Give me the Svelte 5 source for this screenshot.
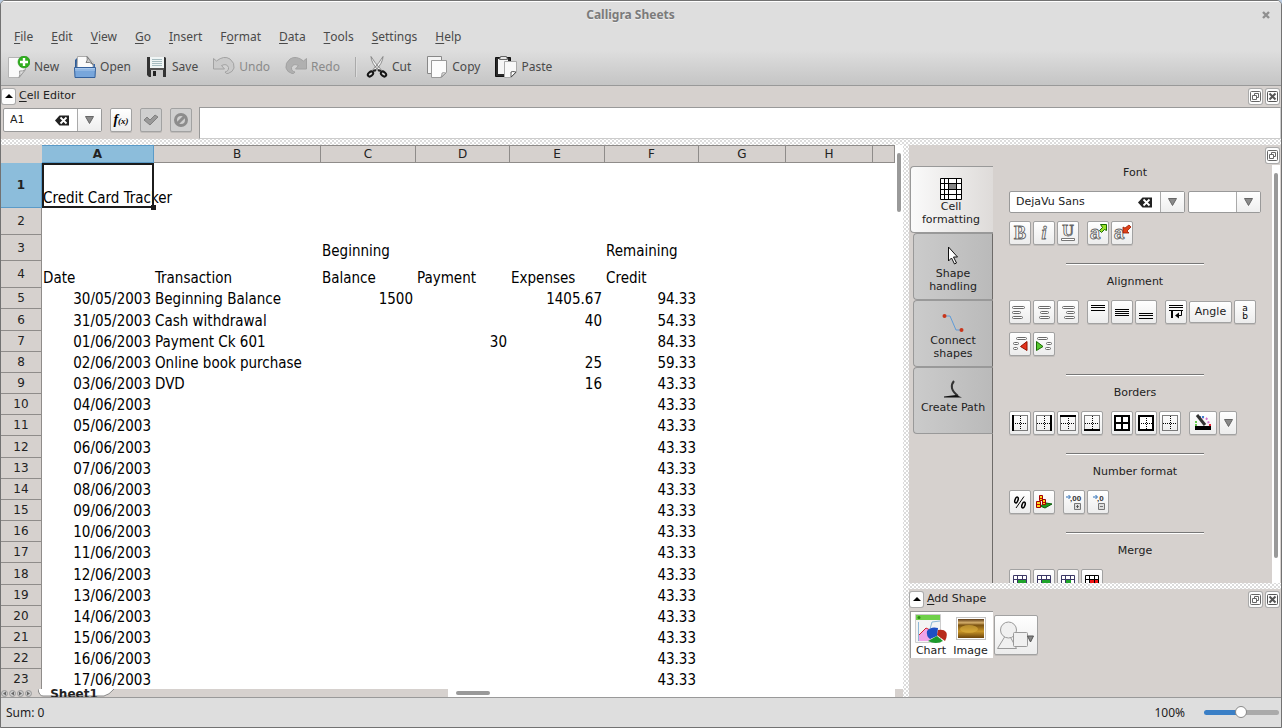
<script lang="ts">
  interface Row {
    n: number;
    height: number;
    cells: string[];
  }

  const columns = [
    { name: "A", width: 112 },
    { name: "B", width: 167 },
    { name: "C", width: 95 },
    { name: "D", width: 94 },
    { name: "E", width: 95 },
    { name: "F", width: 94 },
    { name: "G", width: 87 },
    { name: "H", width: 87 },
  ];

  const menus = ["File", "Edit", "View", "Go", "Insert", "Format", "Data", "Tools", "Settings", "Help"];
  // index of the underlined letter, when it is not the first one
  const accel: Record<string, number> = { Format: 1 };

  const tools = [
    { id: "new", label: "New" },
    { id: "open", label: "Open" },
    { id: "save", label: "Save" },
    { id: "undo", label: "Undo", disabled: true },
    { id: "redo", label: "Redo", disabled: true },
    { id: "sep", label: "" },
    { id: "cut", label: "Cut" },
    { id: "copy", label: "Copy" },
    { id: "paste", label: "Paste" },
  ];

  const head: Row[] = [
    { n: 1, height: 45, cells: ["Credit Card Tracker"] },
    { n: 2, height: 27, cells: [] },
    { n: 3, height: 26, cells: ["", "", "Beginning", "", "", "Remaining"] },
    { n: 4, height: 27, cells: ["Date", "Transaction", "Balance", "Payment", "Expenses", "Credit"] },
  ];

  const entries = [
    ["Beginning Balance", "1500", "", "1405.67", "94.33"],
    ["Cash withdrawal", "", "", "40", "54.33"],
    ["Payment Ck 601", "", "30", "", "84.33"],
    ["Online book purchase", "", "", "25", "59.33"],
    ["DVD", "", "", "16", "43.33"],
  ];

  function dateFor(i: number) {
    const d = new Date(2003, 4, 30 + i);
    const pad = (v: number) => String(v).padStart(2, "0");
    return `${pad(d.getDate())}/${pad(d.getMonth() + 1)}/${d.getFullYear()}`;
  }

  const body: Row[] = Array.from({ length: 19 }, (_, i) => ({
    n: i + 5,
    height: (i + 5) % 6 === 0 ? 22 : 21,
    cells: [dateFor(i), ...(entries[i] ?? ["", "", "", "", "43.33"])],
  }));

  const rows = [...head, ...body];

  const isValue = (text: string) => /^[\d./]+$/.test(text);

  const tabs = [
    { id: "cells", label: ["Cell", "formatting"] },
    { id: "pointer", label: ["Shape", "handling"] },
    { id: "connect", label: ["Connect", "shapes"] },
    { id: "path", label: ["Create Path"] },
  ];
  let activeTab = "cells";

  // every inner list is one run of buttons
  const fontButtons = [["bold", "italic", "underline"], ["bigger", "smaller"]];
  const alignButtons = [["left", "center", "right"], ["top", "middle", "bottom"]];
  const borderButtons = [["b-left", "b-right", "b-top", "b-bottom"], ["b-all", "b-outline", "b-none"]];
  const numberButtons = [["percent", "money"], ["more-digits", "less-digits"]];
  const mergeButtons = [["merge", "merge-h", "merge-v", "split"]];

  let cellName = "A1";
  let fontName = "DejaVu Sans";
  let fontSize = "";
  let formula = "";
  let zoom = 49;
</script>

{#snippet icon(id: string)}
  {#if id === "new"}
    <svg width="22" height="22" viewBox="0 0 22 22">
      <path d="M.5 1.500h17v12l-6 8H.5z" fill="#fafafa" stroke="#b4b4b4" />
      <path d="M17.500 13.500q-3 2-6 1.500 1 3.500-.5 6.500z" fill="#e0e0e0" stroke="#999" />
      <circle cx="16" cy="6" r="6" fill="#2fae1d" stroke="#1f8f12" stroke-width=".6" />
      <path d="M16 2v8M12 6h8" stroke="#fff" stroke-width="2.400" />
    </svg>
  {:else if id === "open"}
    <svg width="22" height="22" viewBox="0 0 22 22">
      <path d="M1 4l2-2h3v10H1z" fill="#2d5b96" />
      <path d="M18 8h3v6h-4z" fill="#3a6bab" />
      <path d="M3.500.5H13l6 6v8h-16z" fill="#fafafa" stroke="#aaa" />
      <path d="M13 .5q1 4-1 6 4-1 7 2z" fill="#ccc" stroke="#666" stroke-width=".8" />
      <path d="M.5 11.500h21l-.5 10H1z" fill="#78a6db" stroke="#33609c" />
      <path d="M1 12.500h20M1 14h20" stroke="#a9c8ec" />
    </svg>
  {:else if id === "save"}
    <svg width="22" height="22" viewBox="0 0 22 22">
      <path d="M1 1h18l1 1v19H3l-2-2z" fill="#333" />
      <path d="M4 1h14v11H4z" fill="#f0f5f5" />
      <path d="M6 3.500h10M6 5.500h10M6 7.500h10M6 9.500h10" stroke="#a6bcc0" />
      <path d="M5 14h12v7H5z" fill="#c9c9c9" />
      <path d="M7 15h3v5H7z" fill="#222" />
      <path d="M4 13h14" stroke="#777" />
    </svg>
  {:else if id === "undo" || id === "redo"}
    <svg width="22" height="22" viewBox="0 0 22 22">
      <g transform={id === "redo" ? "matrix(-1 0 0 1 22 0)" : undefined}>
        <path
          d="M.5 2.500l3 2.500Q11-1 17 3q5 4 4 9-1 4-6 5.500-2 .5-3-1.500 4-1 3.500-4.500Q14 7 8.500 9.500l3 3.500H.5z"
          fill={id === "redo" ? "#b0b0b0" : "#cacaca"}
          stroke="#a2a2a2" />
      </g>
    </svg>
  {:else if id === "cut"}
    <svg width="22" height="22" viewBox="0 0 22 22">
      <path d="M5 .5q0 6 8 15l2-2Q8 6 5 .5zM17 .5q0 6-8 15l-2-2Q14 6 17 .5z" fill="#f4f4f4" stroke="#777" stroke-width=".8" />
      <ellipse cx="4.500" cy="18" rx="3" ry="2" fill="none" stroke="#151515" stroke-width="2" transform="rotate(-40 4.500 18)" />
      <ellipse cx="17.500" cy="18" rx="3" ry="2" fill="none" stroke="#151515" stroke-width="2" transform="rotate(40 17.500 18)" />
      <path d="M7 15l3-1M15 15l-3-1" stroke="#222" stroke-width="2" />
    </svg>
  {:else if id === "copy"}
    <svg width="22" height="22" viewBox="0 0 22 22">
      <path d="M1.500.5h14v17h-14z" fill="#f4f4f4" stroke="#888" />
      <path d="M5.500 4.500h15v12l-5 5h-10z" fill="#fcfcfc" stroke="#999" />
      <path d="M20 17q-3-1-4 0 0 2-1 4z" fill="#d8d8d8" stroke="#888" stroke-width=".7" />
    </svg>
  {:else if id === "paste"}
    <svg width="22" height="22" viewBox="0 0 22 22">
      <path d="M.5 1.500h15v19H.5z" fill="#292929" stroke="#111" />
      <path d="M3 3h10v15H3z" fill="#f5f5f5" />
      <path d="M5.500.5h6l1 3h-8z" fill="#e5e5e5" stroke="#666" />
      <path d="M9.500 5.500h12v11l-5 5h-7z" fill="#f8f8f8" stroke="#aaa" />
      <path d="M21 16q-4-1-5 0 0 3 0 5z" fill="#fff" stroke="#444" stroke-width=".9" />
    </svg>
  {:else if id === "clear"}
    <svg width="14" height="11" viewBox="0 0 14 11">
      <path d="M0 5.500L4.500.5H14v10H4.500z" fill="#222" />
      <path d="M5.500 2.500l6 6m0-6l-6 6" stroke="#fff" stroke-width="1.800" />
    </svg>
  {:else if id === "drop"}
    <svg width="9" height="8" viewBox="0 0 9 8">
      <path d="M.5.500h8L4.500 7.500z" fill="#8a8a8a" stroke="#666" />
    </svg>
  {:else if id === "float"}
    <svg width="11" height="11" viewBox="0 0 11 11" fill="none" stroke="#666">
      <rect x=".5" y=".5" width="10" height="10" rx="1" />
      <path d="M4.500 4.500v-2h4v4h-2M2.500 4.500h4v4h-4z" />
    </svg>
  {:else if id === "close"}
    <svg width="11" height="11" viewBox="0 0 11 11" fill="none" stroke="#555">
      <rect x=".5" y=".5" width="10" height="10" rx="1" />
      <path d="M2.500 2.500l6 6m0-6l-6 6" stroke-width="2" />
    </svg>
  {:else if id === "up"}
    <svg width="8" height="4" viewBox="0 0 8 4"><path d="M0 4l4-4 4 4z" fill="#000" /></svg>
  {:else if id === "ok"}
    <svg width="16" height="14" viewBox="0 0 16 14">
      <path d="M1 7l3-3 3 3 5-5 3 2-8 8z" fill="#999" stroke="#808080" />
    </svg>
  {:else if id === "cancel"}
    <svg width="16" height="16" viewBox="0 0 16 16" fill="none">
      <circle cx="8" cy="8" r="5.500" stroke="#8c8c8c" stroke-width="3" />
      <path d="M4.500 11.500l7-7" stroke="#8c8c8c" stroke-width="3" />
    </svg>
  {:else if id === "cells"}
    <svg width="22" height="22" viewBox="0 0 22 22">
      <path d="M.5.500h21v21H.5z" fill="#fff" stroke="#000" />
      <path d="M9 6h7v5H9z" fill="#888" />
      <path d="M4.500 0v22M8.500 0v22M16.500 0v22M0 5.500h22M0 11.500h22M0 16.500h22" stroke="#000" />
    </svg>
  {:else if id === "pointer"}
    <svg width="22" height="22" viewBox="0 0 22 22">
      <path d="M6.500 2v14l3-3 3 6 2-1-3-6h4z" fill="#fff" stroke="#111" />
    </svg>
  {:else if id === "connect"}
    <svg width="22" height="22" viewBox="0 0 22 22">
      <path d="M2 4h6l6 14h6" fill="none" stroke="#5e9bd8" />
      <circle cx="2.500" cy="4" r="2" fill="#c8351b" />
      <circle cx="19.500" cy="18" r="2" fill="#c8351b" />
    </svg>
  {:else if id === "path"}
    <svg width="22" height="22" viewBox="0 0 22 22">
      <path d="M12 2q-6 7 4 15" fill="none" stroke="#333" stroke-width="2" />
      <path d="M2 17.500l12-1.500 6 2.500H2z" fill="#111" />
    </svg>
  {:else if id === "bold" || id === "italic" || id === "underline"}
    <svg width="18" height="18" viewBox="0 0 18 18">
      <text
        x="9"
        y={id === "underline" ? 12 : 15}
        text-anchor="middle"
        font-family="Liberation Serif, serif"
        font-weight="bold"
        font-style={id === "italic" ? "italic" : "normal"}
        font-size={id === "underline" ? 16 : 18}
        fill="#fff"
        stroke="#666"
        stroke-width=".9">{id === "bold" ? "B" : id === "italic" ? "i" : "U"}</text>
      {#if id === "underline"}<path d="M2.500 14.500h13v2h-13z" fill="#fff" stroke="#777" />{/if}
    </svg>
  {:else if id === "bigger" || id === "smaller"}
    <svg width="18" height="18" viewBox="0 0 18 18">
      <text x="1" y="15" font-family="Liberation Sans, sans-serif" font-weight="bold" font-size="18" fill="#fff" stroke="#666" stroke-width=".9">a</text>
      {#if id === "bigger"}
        <path d="M11.500.500h6v6l-2-1-3 3-2-2 3-3z" fill="#9be02c" stroke="#176b00" />
      {:else}
        <path d="M10 9V3l2 1 4-3 2 2-4 4 2 2z" fill="#e0431b" stroke="#9c1c00" stroke-width=".8" />
      {/if}
    </svg>
  {:else if id === "left" || id === "center" || id === "right"}
    <svg width="18" height="18" viewBox="0 0 18 18" fill="#fff" stroke="#6a6a6a">
      <rect x={id === "left" ? 1.5 : 3.5} y="3.500" width="12" height="2" rx="1" />
      <rect x={id === "left" ? 1.5 : id === "center" ? 5.5 : 7.5} y="8.500" width="8" height="2" rx="1" />
      <rect x={id === "left" ? 1.5 : id === "center" ? 4.5 : 5.5} y="13.500" width="10" height="2" rx="1" />
    </svg>
  {:else if id === "top" || id === "middle" || id === "bottom"}
    <svg width="18" height="18" viewBox="0 0 18 18" stroke="#000">
      {#if id === "top"}
        <path d="M2 2.500h14M2 4.500h14M2 7.500h14" />
      {:else if id === "middle"}
        <path d="M2 6.500h14M2 8.500h14M2 10.500h14M2 12.500h14" />
      {:else}
        <path d="M2 10.500h14M2 12.500h14M2 15.500h14" />
      {/if}
    </svg>
  {:else if id === "wrap"}
    <svg width="18" height="18" viewBox="0 0 18 18" fill="none" stroke="#000">
      <path d="M2 2.500h14M2 4.500h14M2 7.500h14" />
      <path d="M5 8v7" stroke-width="2" />
      <path d="M14.500 8v4.500H9" />
      <path d="M12 9.500v6l-4-3z" fill="#000" stroke="none" />
    </svg>
  {:else if id === "vertical"}
    <svg width="18" height="18" viewBox="0 0 18 18" font-family="DejaVu Sans, sans-serif" font-size="9" text-anchor="middle">
      <text x="9" y="8">a</text>
      <text x="9" y="16">b</text>
    </svg>
  {:else if id === "outdent" || id === "indent"}
    <svg width="18" height="18" viewBox="0 0 18 18" fill="#fff" stroke="#6a6a6a">
      <rect x={id === "outdent" ? 5.5 : 2.5} y="2.500" width="10" height="2" rx="1" />
      {#if id === "outdent"}
        <rect x="2.500" y="7.500" width="5" height="2" rx="1" />
        <rect x="2.500" y="12.500" width="4" height="2" rx="1" />
        <path d="M16 6.500v9L9.500 11.500z" fill="#e5321c" stroke="#8f1200" />
      {:else}
        <rect x="11.500" y="7.500" width="5" height="2" rx="1" />
        <rect x="10.500" y="12.500" width="5" height="2" rx="1" />
        <path d="M1.500 6.500v9L8 11.500z" fill="#58c730" stroke="#186b00" />
      {/if}
    </svg>
  {:else if id.startsWith("b-")}
    <svg width="18" height="18" viewBox="0 0 18 18" fill="none" stroke="#000">
      {#if id === "b-all" || id === "b-outline"}
        <path d="M2 2h14v14H2z" stroke-width="2" fill="#fff" />
      {:else}
        <path d="M1.500 1.500h15v15h-15z" stroke-dasharray="1 1" />
      {/if}
      {#if id === "b-all"}
        <path d="M9 2v14M2 9h14" stroke-width="2" />
      {:else}
        <path d="M9.500 2v14M2 9.500h14" stroke-dasharray="1 1" />
      {/if}
      {#if id === "b-left"}<path d="M2 1v16" stroke-width="2" />{/if}
      {#if id === "b-right"}<path d="M16 1v16" stroke-width="2" />{/if}
      {#if id === "b-top"}<path d="M1 2h16" stroke-width="2" />{/if}
      {#if id === "b-bottom"}<path d="M1 16h16" stroke-width="2" />{/if}
    </svg>
  {:else if id === "color"}
    <svg width="18" height="18" viewBox="0 0 18 18">
      <path d="M8 3.500q6-1 7 8" fill="none" stroke="#d06fd0" stroke-width="2" stroke-dasharray="2 2" />
      <path d="M5 3h6" stroke="#3f7fd0" stroke-width="2" stroke-dasharray="2 1" />
      <path d="M2 7v5" stroke="#62c94c" stroke-width="2" stroke-dasharray="2 1" />
      <path d="M3 1l8 10" stroke="#333" stroke-width="3" />
      <path d="M1 12h16v4H1z" fill="#000" />
      <path d="M15 10h2v2h-2z" fill="#e23" />
    </svg>
  {:else if id === "percent"}
    <svg width="18" height="18" viewBox="0 0 18 18" fill="none" stroke="#000">
      <path d="M13 3.500L5 15" />
      <ellipse cx="5.500" cy="7" rx="1.500" ry="3" stroke-width="1.500" transform="rotate(20 5.500 7)" />
      <ellipse cx="12.500" cy="12" rx="1.500" ry="3" stroke-width="1.500" transform="rotate(20 12.500 12)" />
    </svg>
  {:else if id === "money"}
    <svg width="18" height="18" viewBox="0 0 18 18">
      <path d="M5 13l6-3 6 1-7 4z" fill="#1d9a1d" stroke="#0a5c0a" />
      <path d="M4.500 2.500h3v5h-3zM1.500 8.500h4v6h-4zM7.500 6.500h3v5h-3z" fill="#f9d71c" stroke="#a30000" />
      <path d="M5 5.500h2M2 11.500h3M8 9.500h2" stroke="#d10000" />
    </svg>
  {:else if id === "more-digits" || id === "less-digits"}
    <svg width="18" height="18" viewBox="0 0 18 18">
      <text x={id === "more-digits" ? 5 : 8} y="8" font-family="Liberation Sans, sans-serif" font-weight="bold" font-size="8" fill="#333">{id === "more-digits" ? ",00" : ",0"}</text>
      <path d={id === "more-digits" ? "M1 4h4M3.500 2l2 2-2 2" : "M4 4h4M6.500 2l2 2-2 2"} fill="none" stroke="#2a6db5" />
      <path d="M9.500 10.500h6v6h-6zM11 13.500h3" fill="#ddd" stroke="#777" />
      {#if id === "more-digits"}<path d="M12.500 12v3" stroke="#555" />{/if}
    </svg>
  {:else if id.startsWith("merge") || id === "split"}
    <svg width="18" height="18" viewBox="0 0 18 18">
      <path d="M2.500 3.500h13v11h-13z" fill="#fff" />
      <path
        d={id === "merge-v" ? "M7 8h5v7H7z" : id === "split" ? "M6 8h10v4H6z" : "M7 8h9v4H7z"}
        fill={id === "split" ? "#f01414" : "#1fa32a"} />
      <path d="M2.500 3.500h13v11h-13zM6.500 3v12M11.500 3v4M2 7.500h14M2 11.500h5" fill="none" stroke={id === "split" ? "#000" : "#3b3765"} />
      {#if id === "split"}<path d="M11.500 7v8M6 11.500h10" stroke="#000" />{/if}
    </svg>
  {/if}
{/snippet}

{#snippet groups(list: string[][])}
  {#each list as group}
    <div class="group">
      {#each group as id}
        <button class="tool-btn" aria-label={id}>{@render icon(id)}</button>
      {/each}
    </div>
  {/each}
{/snippet}

<div class="window">
  <header class="chrome">
    <div class="titlebar">
      <h1>Calligra Sheets</h1>
      <button class="window-close" aria-label="Close window">
        <svg width="8" height="8" viewBox="0 0 8 8"><path d="M1 1l6 6m0-6L1 7" stroke="#8f8f8f" stroke-width="2.400" /></svg>
      </button>
    </div>
    <nav class="menubar">
      {#each menus as menu}
        {@const at = accel[menu] ?? 0}
        <button>{menu.slice(0, at)}<u>{menu[at]}</u>{menu.slice(at + 1)}</button>
      {/each}
    </nav>
    <div class="toolbar">
      {#each tools as tool}
        {#if tool.id === "sep"}
          <span class="tool-sep"></span>
        {:else}
          <button disabled={tool.disabled}>{@render icon(tool.id)}<span>{tool.label}</span></button>
        {/if}
      {/each}
    </div>
  </header>

  <section class="editor">
    <div class="dock-title">
      <button class="mini" aria-label="Collapse cell editor">{@render icon("up")}</button>
      <h2><u>C</u>ell Editor</h2>
      <button class="mini" aria-label="Float cell editor">{@render icon("float")}</button>
      <button class="mini" aria-label="Close cell editor">{@render icon("close")}</button>
    </div>
    <div class="editor-row">
      <div class="editor-tools">
        <div class="combo name-box">
          <input type="text" aria-label="Cell name" bind:value={cellName} />
          <button class="clear" aria-label="Clear" on:click={() => (cellName = "")}>{@render icon("clear")}</button>
          <button class="arrow" aria-label="Show names">{@render icon("drop")}</button>
        </div>
        <button class="tool-btn fx" aria-label="Insert function"><i>f<small>(x)</small></i></button>
        <button class="tool-btn off" aria-label="Apply" disabled>{@render icon("ok")}</button>
        <button class="tool-btn off" aria-label="Cancel" disabled>{@render icon("cancel")}</button>
      </div>
      <textarea class="formula" aria-label="Formula" bind:value={formula}></textarea>
    </div>
  </section>

  <div class="grip"></div>

  <main>
    <section class="sheet">
      <div class="sheet-view">
        <div class="grid-area">
          <table>
            <colgroup>
              <col style="width: 41px" />
              {#each columns as col}
                <col style="width: {col.width}px" />
              {/each}
              <col />
            </colgroup>
            <thead>
              <tr>
                <td class="corner"></td>
                {#each columns as col}
                  <th scope="col" class:current={col.name === "A"}>{col.name}</th>
                {/each}
                <th></th>
              </tr>
            </thead>
            <tbody>
              {#each rows as row}
                <tr style="height: {row.height}px">
                  <th scope="row" class:current={row.n === 1}>{row.n}</th>
                  {#each columns as col, c}
                    <td class:value={isValue(row.cells[c] ?? "")} class:selected={row.n === 1 && c === 0}>{row.cells[c] ?? ""}</td>
                  {/each}
                  <td></td>
                </tr>
              {/each}
            </tbody>
          </table>
        </div>
        <div class="vscroll"><span></span></div>
      </div>
      <div class="sheet-bar">
        <div class="sheet-tabs">
          {#each ["First", "Previous", "Next", "Last"] as label, i}
            <button class="step" aria-label="{label} sheet">
              <svg width="7" height="7" viewBox="0 0 7 7">
                <circle cx="3.500" cy="3.500" r="3" fill="#ccc" stroke="#999" />
                <path d={i < 2 ? "M5 1.500v4L2 3.500z" : "M2 1.500v4l3-2z"} fill="#666" />
              </svg>
            </button>
          {/each}
          <button class="sheet-tab">
            <svg width="80" height="8" viewBox="0 0 80 8"><path d="M0 0q1 7 5 7h61q5-1 10-7z" fill="#fff" /><path d="M0 0q1 7 5 7h61q5-1 10-7" fill="none" stroke="#888" /></svg>
            <span>Sheet1</span>
          </button>
        </div>
        <div class="hscroll"><span></span></div>
      </div>
    </section>

    <div class="grip upright"></div>

    <aside>
      <section class="options">
        <div class="dock-title bare">
          <button class="mini" aria-label="Float tool options">{@render icon("float")}</button>
        </div>
        <div class="options-body">
          <div class="tabs">
            {#each tabs as tab}
              <button class="tab" class:active={tab.id === activeTab} on:click={() => (activeTab = tab.id)}>
                {@render icon(tab.id)}
                {#each tab.label as line}<span>{line}</span>{/each}
              </button>
            {/each}
            <div class="tabs-rest"></div>
          </div>

          <div class="panel">
            <h3>Font</h3>
            <div class="row fonts">
              <div class="combo font-name">
                <input type="text" aria-label="Font" bind:value={fontName} />
                <button class="clear" aria-label="Clear font" on:click={() => (fontName = "")}>{@render icon("clear")}</button>
                <button class="arrow" aria-label="Show fonts">{@render icon("drop")}</button>
              </div>
              <div class="combo font-size">
                <select aria-label="Font size" bind:value={fontSize}>
                  <option value=""></option>
                  <option>10</option>
                  <option>12</option>
                </select>
                <span class="arrow">{@render icon("drop")}</span>
              </div>
            </div>
            <div class="row">{@render groups(fontButtons)}</div>
            <hr />

            <h3>Alignment</h3>
            <div class="row">
              {@render groups(alignButtons)}
              <div class="group">
                <button class="tool-btn" aria-label="Wrap text">{@render icon("wrap")}</button>
                <button class="tool-btn angle">Angle</button>
                <button class="tool-btn" aria-label="Vertical text">{@render icon("vertical")}</button>
              </div>
            </div>
            <div class="row">{@render groups([["outdent", "indent"]])}</div>
            <hr />

            <h3>Borders</h3>
            <div class="row">
              {@render groups(borderButtons)}
              <div class="group">
                <button class="tool-btn wide" aria-label="Border color">{@render icon("color")}</button>
                <button class="tool-btn narrow" aria-label="More colors">{@render icon("drop")}</button>
              </div>
            </div>
            <hr />

            <h3>Number format</h3>
            <div class="row">{@render groups(numberButtons)}</div>
            <hr />

            <h3>Merge</h3>
            <div class="row">{@render groups(mergeButtons)}</div>
          </div>

          <div class="vscroll panel-scroll"><span></span></div>
        </div>
      </section>

      <div class="grip"></div>

      <section class="shapes">
        <div class="dock-title">
          <button class="mini" aria-label="Collapse shapes">{@render icon("up")}</button>
          <h2><u>A</u>dd Shape</h2>
          <button class="mini" aria-label="Float shapes">{@render icon("float")}</button>
          <button class="mini" aria-label="Close shapes">{@render icon("close")}</button>
        </div>
        <div class="shapes-row">
          <div class="shape-list">
            <button>
              <svg width="32" height="30" viewBox="0 0 32 30">
                <path d="M.5.500h25v28H.5z" fill="#f4f4f4" stroke="#ccc" />
                <path d="M1 1h24v5H1z" fill="#6fd04a" />
                <circle cx="4" cy="3.500" r="1.500" fill="#2f8f16" />
                <path d="M4 27V21l7-7 5 3v10z" fill="#f0a4e8" />
                <path d="M4 21l7-7 4 2" fill="none" stroke="#d2232a" />
                <path d="M3.500 8v19M15 15l2-7 8-1" fill="none" stroke="#8cb8d8" />
                <path d="M12 17q4-5 11-3l-1 8-7 3q-4-3-3-8z" fill="#1f4fc4" />
                <path d="M22 21l1-5q6-1 8 2t-1 9z" fill="#b82b1b" />
                <path d="M13 27l9-5 6 5q-7 4-15 0z" fill="#1c9a2b" />
              </svg>
              <span>Chart</span>
            </button>
            <button>
              <svg width="30" height="30" viewBox="0 0 30 30">
                <defs>
                  <linearGradient id="scene" x1="0" y1="0" x2="0" y2="1">
                    <stop offset="0" stop-color="#5d3a17" />
                    <stop offset=".2" stop-color="#d6b06c" />
                    <stop offset=".32" stop-color="#7a5212" />
                    <stop offset=".65" stop-color="#c99628" />
                    <stop offset="1" stop-color="#6b440c" />
                  </linearGradient>
                </defs>
                <rect x=".5" y="3.500" width="29" height="22" fill="#fff" stroke="#c4c4c4" />
                <rect x="2" y="5" width="26" height="19" fill="url(#scene)" />
                <ellipse cx="13" cy="15" rx="9" ry="4" fill="#dcb040" opacity=".6" />
              </svg>
              <span>Image</span>
            </button>
          </div>
          <button class="tool-btn more-shapes" aria-label="More shapes">
            <svg width="40" height="30" viewBox="0 0 40 30" fill="#f0f0f0" stroke="#9a9a9a">
              <path d="M1.500 28.500l8-13h4l7 13z" />
              <circle cx="12.500" cy="10" r="8" />
              <rect x="17.500" y="12.500" width="14" height="14" rx="1" />
              <path d="M31.500 16h6l-3 6z" fill="#888" stroke="#555" />
            </svg>
          </button>
        </div>
      </section>
    </aside>
  </main>

  <footer>
    <span>Sum: 0</span>
    <label for="zoom">100%</label>
    <input id="zoom" type="range" min="0" max="100" bind:value={zoom} style="--fill: {zoom}%" />
  </footer>
</div>

<style>
  :global(body) {
    background: #b9cbe0;
  }
  .window {
    box-sizing: border-box;
    height: 100vh;
    display: flex;
    flex-direction: column;
    overflow: hidden;
    border: 1px solid #727272;
    border-radius: 5px 5px 0 0;
    background: #d6d1ce;
    color: #222;
    font: 11px/14px "DejaVu Sans", sans-serif;
  }
  .window * {
    box-sizing: border-box;
  }
  button, input, select, textarea {
    margin: 0;
    padding: 0;
    border: 0;
    background: none;
    color: inherit;
    font: inherit;
  }
  button {
    display: flex;
    align-items: center;
    justify-content: center;
    flex: none;
  }
  h1, h2, h3 {
    margin: 0;
    font: inherit;
  }
  svg {
    display: block;
    flex: none;
  }
  u {
    text-underline-offset: 2px;
  }

  /* title, menus and toolbar */
  .chrome {
    flex: none;
    border-top: 1px solid #fff;
    border-bottom: 1px solid #999;
    background: linear-gradient(#dedede 0, #dedede 48px, #c4c4c4 84px);
    color: #4a4a4a;
    font: 12px/16px "Noto Sans", sans-serif;
  }
  .titlebar {
    display: flex;
    align-items: center;
    height: 25px;
    padding: 0 9px 0 0;
  }
  h1 {
    flex: 1;
    color: #7b7b7b;
    font-weight: bold;
    text-align: center;
    text-shadow: 0 1px #eee;
  }
  .window-close {
    width: 12px;
    height: 12px;
  }
  .menubar {
    display: flex;
    gap: 18px;
    padding: 2px 13px;
  }
  .toolbar {
    display: flex;
    align-items: center;
    gap: 15px;
    height: 38px;
    padding: 2px 7px 0;
  }
  .toolbar button {
    gap: 4px;
  }
  .toolbar button:disabled {
    color: #8a8a8a;
  }
  .tool-sep {
    width: 2px;
    height: 20px;
    margin-right: -6px;
    border-left: 1px solid #aaa;
    border-right: 1px solid #ddd;
  }

  /* docks */
  .dock-title {
    display: flex;
    align-items: center;
    gap: 4px;
    height: 20px;
    padding: 0 2px 0 1px;
  }
  .dock-title h2 {
    flex: 1;
  }
  .bare {
    justify-content: flex-end;
  }
  .mini {
    width: 13px;
    height: 15px;
    border-radius: 2px;
    background: #fdfdfd;
    box-shadow: 0 0 0 1px #aaa;
  }
  .grip {
    flex: none;
    height: 6px;
    background-color: #dcdcdc;
    background-image: radial-gradient(#fff 1px, transparent 1px), radial-gradient(#fff 1px, transparent 1px);
    background-size: 4px 4px;
    background-position: 0 0, 2px 2px;
  }
  .upright {
    width: 6px;
    height: auto;
  }
  .editor {
    flex: none;
  }
  .editor-row {
    display: flex;
    gap: 7px;
    height: 33px;
    padding: 1px 0 0 2px;
  }
  .editor-tools {
    display: flex;
    gap: 8px;
    padding-top: 1px;
  }
  .combo {
    display: flex;
    height: 22px;
    border: 1px solid #999;
    border-radius: 2px;
    background: #fff;
  }
  .combo input {
    flex: 1;
    min-width: 0;
    padding-left: 6px;
  }
  .combo .clear {
    width: 30px;
  }
  .arrow {
    display: flex;
    align-items: center;
    justify-content: center;
    width: 24px;
    border-left: 1px solid #aaa;
    background: linear-gradient(#fff, #eee);
  }
  .name-box {
    width: 99px;
    height: 24px;
  }
  .tool-btn {
    width: 22px;
    height: 24px;
    border: 1px solid #a2a2a2;
    border-radius: 2px;
    background: linear-gradient(#fff, #ececec);
    box-shadow: 0 1px #c0bcb9;
  }
  .fx {
    color: #000;
    font: bold 14px/16px "Liberation Serif", serif;
  }
  .fx small {
    font-size: 9px;
  }
  .off {
    background: #cfcfcf;
  }
  .formula {
    flex: 1;
    border: 1px solid #ccc;
    border-top-color: #999;
    border-left-color: #999;
    background: #fff;
    resize: none;
  }
  main {
    flex: 1;
    display: flex;
    min-height: 0;
  }

  /* spreadsheet */
  .sheet {
    flex: 1;
    display: flex;
    flex-direction: column;
    min-width: 0;
  }
  .sheet-view {
    flex: 1;
    display: flex;
    min-height: 0;
  }
  .grid-area {
    flex: 1;
    min-width: 0;
    overflow: hidden;
    background: #fff;
  }
  table {
    width: 100%;
    table-layout: fixed;
    border-collapse: separate;
    border-spacing: 0;
    color: #000;
    font: 15px/20px "DejaVu Sans Condensed", "DejaVu Sans", sans-serif;
  }
  th, td {
    padding: 0;
  }
  th {
    border-right: 1px solid #8f8c8a;
    border-bottom: 1px solid #8f8c8a;
    background: #d6d1ce;
    color: #222;
    font: 12px/16px "DejaVu Sans", sans-serif;
  }
  thead th {
    height: 18px;
    border-top: 1px solid #8f8c8a;
  }
  th.current {
    border-color: #5b9bc8;
    background: #8cbddb;
    font-weight: bold;
  }
  .corner {
    background: #d6d1ce;
  }
  tbody td {
    padding: 0 3px 0 1px;
    text-align: left;
    vertical-align: bottom;
    white-space: nowrap;
  }
  td.value {
    text-align: right;
  }
  .selected {
    position: relative;
    outline: 2px solid #1c1c1c;
    outline-offset: -2px;
  }
  .selected::after {
    content: "";
    position: absolute;
    right: -2px;
    bottom: -2px;
    width: 5px;
    height: 5px;
    background: #1c1c1c;
  }
  .vscroll {
    flex: none;
    width: 8px;
    padding: 8px 2px 0;
    background: #fff;
  }
  .vscroll span {
    display: block;
    height: 11%;
    border-radius: 2px;
    background: #999;
  }
  .sheet-bar {
    flex: none;
    display: flex;
    height: 8px;
    padding-right: 8px;
    overflow: hidden;
  }
  .sheet-tabs {
    flex: 1;
    display: flex;
    gap: 1px;
  }
  .step {
    width: 7px;
  }
  .sheet-tab {
    position: relative;
    width: 80px;
    margin-left: 5px;
    font-size: 12px;
    font-weight: bold;
  }
  .sheet-tab svg {
    position: absolute;
    left: 0;
    top: 0;
  }
  .sheet-tab span {
    position: relative;
    padding: 2px 8px 0 0;
  }
  .hscroll {
    flex: none;
    width: 50%;
    padding: 2px 8px;
    background: #fff;
  }
  .hscroll span {
    display: block;
    width: 8%;
    height: 4px;
    border-radius: 2px;
    background: #999;
  }

  /* right side */
  aside {
    flex: none;
    display: flex;
    flex-direction: column;
    width: 372px;
  }
  .options {
    flex: 1;
    display: flex;
    flex-direction: column;
    min-height: 0;
  }
  .options-body {
    flex: 1;
    display: flex;
    min-height: 0;
    padding-right: 1px;
  }
  .tabs {
    display: flex;
    flex-direction: column;
    width: 84px;
    padding: 1px 0 0 1px;
  }
  .tab {
    flex-direction: column;
    justify-content: flex-start;
    height: 67px;
    margin-left: 3px;
    padding-top: 11px;
    border: 1px solid #999;
    border-radius: 4px 0 0 4px;
    border-right-color: #6e6b69;
    background: linear-gradient(90deg, #cbcbcb, #bababa);
    line-height: 13px;
  }
  .tab.active {
    margin-left: 0;
    border-right: 0;
    padding-right: 2px;
    background: linear-gradient(90deg, #fafafa, #dedbd9);
  }
  .tabs-rest {
    flex: 1;
    border-right: 1px solid #6e6b69;
  }
  .panel {
    flex: 1;
    display: flex;
    flex-direction: column;
    min-width: 0;
    overflow: hidden;
    padding: 0 11px 0 16px;
  }
  h3 {
    flex: none;
    padding-bottom: 10px;
    line-height: 16px;
    text-align: center;
  }
  .row {
    flex: none;
    display: flex;
    gap: 8px;
    margin-bottom: 8px;
  }
  .fonts {
    gap: 3px;
  }
  .font-name {
    flex: 1;
    min-width: 0;
  }
  .font-size {
    flex: none;
    width: 73px;
  }
  .font-size select {
    flex: 1;
    min-width: 0;
    appearance: none;
  }
  .font-size .arrow {
    pointer-events: none;
  }
  .group {
    display: flex;
    align-items: center;
    gap: 2px;
  }
  .angle {
    width: 43px;
    height: 22px;
  }
  .wide {
    width: 28px;
  }
  .narrow {
    width: 18px;
  }
  hr {
    flex: none;
    width: 55%;
    height: 2px;
    margin: 10px auto 9px;
    border: 0;
    border-top: 1px solid #777;
    background: #fff;
  }
  .panel-scroll span {
    height: 94%;
  }
  .shapes {
    flex: none;
    height: 108px;
  }
  .shapes-row {
    display: flex;
    align-items: center;
    gap: 1px;
    padding: 2px 1px;
  }
  .shape-list {
    display: flex;
    height: 47px;
    padding-right: 3px;
    overflow: hidden;
    border-top: 1px solid #999;
    border-left: 1px solid #999;
    background: #fff;
  }
  .shape-list button {
    flex-direction: column;
    justify-content: flex-start;
    width: 40px;
    padding-top: 2px;
  }
  .shape-list button:last-child {
    width: 39px;
  }
  .more-shapes {
    width: 44px;
    height: 40px;
  }

  footer {
    flex: none;
    display: flex;
    align-items: center;
    height: 30px;
    padding: 0 2px 0 5px;
    border-top: 1px solid #999;
    background: #dedede;
    font: 12px/16px "Noto Sans", sans-serif;
  }
  footer label {
    margin-left: auto;
    margin-right: 19px;
  }
  footer input {
    width: 75px;
    height: 16px;
    appearance: none;
  }
  footer input::-webkit-slider-runnable-track {
    height: 5px;
    border-radius: 3px;
    background: linear-gradient(90deg, #3a7fc6 var(--fill), #aaa var(--fill));
  }
  footer input::-webkit-slider-thumb {
    appearance: none;
    width: 12px;
    height: 12px;
    margin-top: -4px;
    border: 1px solid #888;
    border-radius: 50%;
    background: #fff;
  }
</style>
